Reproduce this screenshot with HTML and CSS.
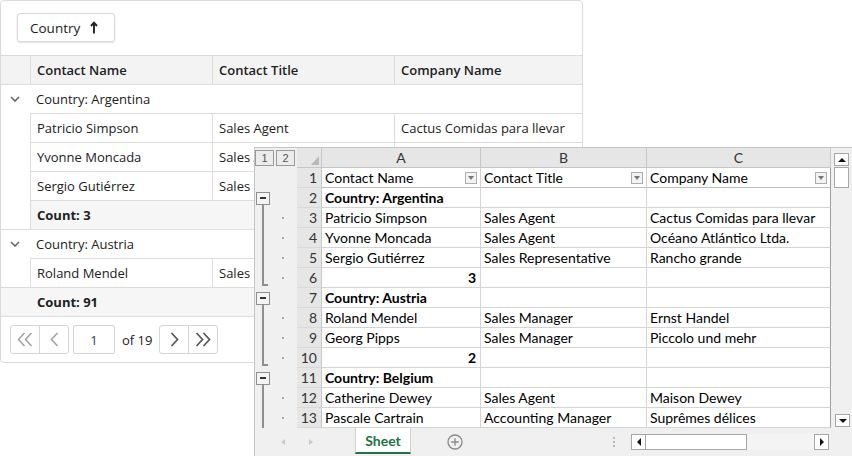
FILE: index.html
```html
<!DOCTYPE html>
<html>
<head>
<meta charset="utf-8">
<link rel="stylesheet" href="styles.css">
</head>
<body>
<div class="page">
  <div class="grid">
    <div class="group-panel">
      <div class="chip"><span>Country</span>
        <svg class="arrow" width="8" height="13" viewBox="0 0 8 13"><path d="M4 12.5V2 M1 5L4 1.6L7 5" stroke="#222" stroke-width="1.9" fill="none" stroke-linejoin="miter"/></svg>
      </div>
    </div>
    <div class="row full head">
      <div class="ind"></div><div class="cell">Contact Name</div><div class="cell">Contact Title</div><div class="cell last">Company Name</div>
    </div>
    <div class="row full grp">
      <div class="ind chev"><svg width="10" height="6" viewBox="0 0 10 6"><path d="M1 1L5 5L9 1" stroke="#666" stroke-width="1.6" fill="none"/></svg></div>
      <div class="gcap">Country: Argentina</div>
    </div>
    <div class="row"><div class="ind"></div><div class="cell">Patricio Simpson</div><div class="cell">Sales Agent</div><div class="cell last">Cactus Comidas para llevar</div></div>
    <div class="row"><div class="ind"></div><div class="cell">Yvonne Moncada</div><div class="cell">Sales Agent</div><div class="cell last">Océano Atlántico Ltda.</div></div>
    <div class="row"><div class="ind"></div><div class="cell">Sergio Gutiérrez</div><div class="cell">Sales Representative</div><div class="cell last">Rancho grande</div></div>
    <div class="row"><div class="ind"></div><div class="cell last sum">Count: 3</div></div>
    <div class="row full grp">
      <div class="ind chev"><svg width="10" height="6" viewBox="0 0 10 6"><path d="M1 1L5 5L9 1" stroke="#666" stroke-width="1.6" fill="none"/></svg></div>
      <div class="gcap">Country: Austria</div>
    </div>
    <div class="row"><div class="ind"></div><div class="cell">Roland Mendel</div><div class="cell">Sales Manager</div><div class="cell last">Ernst Handel</div></div>
    <div class="row full total">Count: 91</div>
    <div class="pager">
      <div class="pg">
        <div class="pb"><svg width="16" height="15" viewBox="0 0 16 15"><path d="M7.5 1L1.5 7.5L7.5 14M14.5 1L8.5 7.5L14.5 14" stroke="#a3a3a3" stroke-width="1.6" fill="none"/></svg></div>
        <div class="pb"><svg width="9" height="15" viewBox="0 0 9 15"><path d="M7.5 1L1.5 7.5L7.5 14" stroke="#a3a3a3" stroke-width="1.6" fill="none"/></svg></div>
      </div>
      <div class="pinput">1</div>
      <div class="pof">of 19</div>
      <div class="pg">
        <div class="pb"><svg width="9" height="15" viewBox="0 0 9 15"><path d="M1.5 1L7.5 7.5L1.5 14" stroke="#555" stroke-width="1.7" fill="none"/></svg></div>
        <div class="pb"><svg width="16" height="15" viewBox="0 0 16 15"><path d="M1.5 1L7.5 7.5L1.5 14M8.5 1L14.5 7.5L8.5 14" stroke="#555" stroke-width="1.7" fill="none"/></svg></div>
      </div>
    </div>
  </div>

  <div class="sheet">
    <div class="sbody">
      <div class="cells">
        <div class="oc top"><span class="lvl">1</span><span class="lvl">2</span></div>
        <div class="rh corner"><i class="tri"></i></div>
        <div class="ch">A</div><div class="ch">B</div><div class="ch">C</div>

        <div class="oc"></div><div class="rh">1</div>
        <div class="c flt"><span>Contact Name</span><i class="dd"><b></b></i></div>
        <div class="c flt"><span>Contact Title</span><i class="dd"><b></b></i></div>
        <div class="c flt cc"><span>Company Name</span><i class="dd"><b></b></i></div>

        <div class="oc ob"><i class="minus"></i></div><div class="rh">2</div>
        <div class="c b">Country: Argentina</div><div class="c"></div><div class="c cc"></div>

        <div class="oc ol"></div><div class="rh">3</div>
        <div class="c">Patricio Simpson</div><div class="c">Sales Agent</div><div class="c cc">Cactus Comidas para llevar</div>

        <div class="oc ol"></div><div class="rh">4</div>
        <div class="c">Yvonne Moncada</div><div class="c">Sales Agent</div><div class="c cc">Océano Atlántico Ltda.</div>

        <div class="oc ol"></div><div class="rh">5</div>
        <div class="c">Sergio Gutiérrez</div><div class="c">Sales Representative</div><div class="c cc">Rancho grande</div>

        <div class="oc oe"></div><div class="rh">6</div>
        <div class="c b r">3</div><div class="c"></div><div class="c cc"></div>

        <div class="oc ob"><i class="minus"></i></div><div class="rh">7</div>
        <div class="c b">Country: Austria</div><div class="c"></div><div class="c cc"></div>

        <div class="oc ol"></div><div class="rh">8</div>
        <div class="c">Roland Mendel</div><div class="c">Sales Manager</div><div class="c cc">Ernst Handel</div>

        <div class="oc ol"></div><div class="rh">9</div>
        <div class="c">Georg Pipps</div><div class="c">Sales Manager</div><div class="c cc">Piccolo und mehr</div>

        <div class="oc oe"></div><div class="rh">10</div>
        <div class="c b r">2</div><div class="c"></div><div class="c cc"></div>

        <div class="oc ob"><i class="minus"></i></div><div class="rh">11</div>
        <div class="c b">Country: Belgium</div><div class="c"></div><div class="c cc"></div>

        <div class="oc ol"></div><div class="rh">12</div>
        <div class="c">Catherine Dewey</div><div class="c">Sales Agent</div><div class="c cc">Maison Dewey</div>

        <div class="oc ol"></div><div class="rh">13</div>
        <div class="c">Pascale Cartrain</div><div class="c">Accounting Manager</div><div class="c cc">Suprêmes délices</div>
      </div>
      <div class="vscroll">
        <i class="sbtn"><b class="up"></b></i>
        <i class="vthumb"></i>
        <span class="vfill"></span>
        <i class="sbtn dn"><b class="down"></b></i>
      </div>
    </div>
    <div class="tabs">
      <i class="nav navl"></i>
      <i class="nav navr"></i>
      <div class="tab">Sheet</div>
      <div class="plus"><svg width="16" height="16" viewBox="0 0 16 16"><circle cx="8" cy="8" r="7" stroke="#8a8a8a" stroke-width="1.3" fill="none"/><path d="M8 4.2V11.8M4.2 8H11.8" stroke="#8a8a8a" stroke-width="1.3"/></svg></div>
      <div class="dots"><i></i><i></i><i></i></div>
      <div class="hs">
        <i class="ab"><b class="left"></b></i>
        <i class="hthumb"></i>
        <span class="htrack"></span>
        <i class="ab abr"><b class="right"></b></i>
      </div>
    </div>
  </div>
</div>
</body>
</html>
```

FILE: styles.css
```css
body {
  margin: 0;
  background: #fff;
  font-family: "Open Sans", "Noto Sans", sans-serif;
}

.page {
  position: relative;
  width: 852px;
  height: 456px;
  overflow: hidden;
}

/* ---------- Grid ---------- */
.grid {
  width: 583px;
  box-sizing: border-box;
  border: 1px solid #dadada;
  border-radius: 4px;
  font-size: 13px;
  color: #212121;
}

.group-panel {
  height: 54px;
  box-sizing: border-box;
  padding: 12px 0 0 16px;
  display: flex;
  align-items: flex-start;
}

.chip {
  width: 98px;
  height: 29px;
  box-sizing: border-box;
  border: 1px solid #d8d8d8;
  border-radius: 3px;
  box-shadow: 0 1px 2px rgba(0, 0, 0, 0.12);
  display: flex;
  align-items: center;
  padding-left: 12px;
  gap: 10px;
  font-size: 13.5px;
}

.row {
  display: flex;
  height: 29px;
  box-sizing: border-box;
}

.row.full {
  border-top: 1px solid #dcdcdc;
}

.ind {
  width: 29px;
  flex: none;
}

.chev {
  display: flex;
  align-items: center;
  padding-left: 9px;
  box-sizing: border-box;
}

.cell {
  width: 182px;
  flex: none;
  box-sizing: border-box;
  border-left: 1px solid #dcdcdc;
  border-top: 1px solid #dcdcdc;
  padding-left: 6px;
  display: flex;
  align-items: center;
  white-space: nowrap;
  overflow: hidden;
}

.cell.last {
  flex: 1;
  width: auto;
}

.row.full .cell {
  border-top: none;
}

.head {
  background: #f3f3f3;
  font-weight: 600;
}

.gcap {
  display: flex;
  align-items: center;
  padding-left: 6px;
}

.sum {
  background: #f6f6f6;
  font-weight: 700;
}

.total {
  background: #f6f6f6;
  font-weight: 700;
  align-items: center;
  padding-left: 36px;
}

.pager {
  height: 46px;
  box-sizing: border-box;
  border-top: 1px solid #dcdcdc;
  display: flex;
  align-items: center;
  padding-left: 9px;
}

.pg {
  display: flex;
  height: 29px;
  box-sizing: border-box;
  border: 1px solid #d5d5d5;
  border-radius: 3px;
}

.pb {
  width: 28px;
  display: flex;
  align-items: center;
  justify-content: center;
}

.pb + .pb {
  border-left: 1px solid #d5d5d5;
}

.pinput {
  width: 42px;
  height: 29px;
  box-sizing: border-box;
  margin-left: 4px;
  border: 1px solid #d5d5d5;
  border-radius: 2px;
  display: flex;
  align-items: center;
  justify-content: center;
  color: #2b3a67;
}

.pof {
  margin: 0 7px;
  font-size: 13px;
}

/* ---------- Spreadsheet ---------- */
.sheet {
  position: absolute;
  left: 254px;
  top: 147px;
  width: 598px;
  height: 309px;
  box-sizing: border-box;
  border-left: 1px solid #c4c4c4;
  border-top: 1px solid #c4c4c4;
  background: #f0f0f0;
  display: flex;
  flex-direction: column;
  font-family: "Lato", "Open Sans", sans-serif;
  font-size: 14px;
  color: #000;
}

.sbody {
  display: flex;
  height: 280px;
}

.cells {
  display: grid;
  grid-template-columns: 42px 25px 159px 166px 184px;
  grid-auto-rows: 20px;
  align-content: start;
}

.oc {
  background: #f0f0f0;
  box-sizing: border-box;
}

.oc.top {
  display: flex;
  gap: 2px;
  padding-top: 2px;
  box-sizing: border-box;
}

.lvl {
  width: 19px;
  height: 16px;
  box-sizing: border-box;
  border: 1px solid #9a9a9a;
  background: #ececec;
  font-size: 11px;
  color: #555;
  display: flex;
  align-items: center;
  justify-content: center;
  font-family: "Liberation Sans", sans-serif;
}

.ob {
  display: flex;
  align-items: center;
  padding-left: 1px;
  background:
    linear-gradient(#8f8f8f, #8f8f8f) 7px 16px / 2px 4px no-repeat,
    #f0f0f0;
}

.minus {
  width: 14px;
  height: 13px;
  box-sizing: border-box;
  border: 1px solid #8f8f8f;
  background:
    linear-gradient(#333, #333) center / 6px 2px no-repeat,
    #f4f4f4;
}

.ol {
  background:
    linear-gradient(#8f8f8f, #8f8f8f) 7px 0 / 2px 100% no-repeat,
    linear-gradient(#a8a8a8, #a8a8a8) 27px 9px / 2px 2px no-repeat,
    #f0f0f0;
}

.oe {
  background:
    linear-gradient(#8f8f8f, #8f8f8f) 7px 0 / 2px 18px no-repeat,
    linear-gradient(#8f8f8f, #8f8f8f) 7px 16px / 6px 2px no-repeat,
    linear-gradient(#a8a8a8, #a8a8a8) 27px 9px / 2px 2px no-repeat,
    #f0f0f0;
}

.rh {
  background: #e6e6e6;
  box-sizing: border-box;
  border-right: 1px solid #c6c6c6;
  border-bottom: 1px solid #d9d9d9;
  display: flex;
  align-items: center;
  justify-content: flex-end;
  padding-right: 4px;
  color: #333;
}

.rh.corner {
  align-items: flex-end;
  justify-content: flex-end;
  padding: 0 2px 2px 0;
  border-bottom: 1px solid #c6c6c6;
}

.tri {
  width: 8px;
  height: 9px;
  background: #b8b8b8;
  clip-path: polygon(100% 0, 100% 100%, 0 100%);
}

.ch {
  background: #e6e6e6;
  box-sizing: border-box;
  border-right: 1px solid #c6c6c6;
  border-bottom: 1px solid #c6c6c6;
  display: flex;
  align-items: center;
  justify-content: center;
  color: #333;
}

.c {
  background: #fff;
  box-sizing: border-box;
  border-right: 1px solid #d4d4d4;
  border-bottom: 1px solid #d4d4d4;
  padding-left: 3px;
  display: flex;
  align-items: center;
  white-space: nowrap;
  overflow: hidden;
}

.c.cc {
  border-right-color: #9e9e9e;
}

.c.b {
  font-weight: 700;
}

.c.r {
  justify-content: flex-end;
  padding-right: 4px;
}

.c.flt {
  justify-content: space-between;
  padding-right: 3px;
  border-bottom-color: #bdbdbd;
}

.dd {
  width: 12px;
  height: 12px;
  box-sizing: border-box;
  border: 1px solid #adadad;
  background: #f3f3f3;
  display: flex;
  align-items: center;
  justify-content: center;
}

.dd b {
  width: 0;
  height: 0;
  border-left: 3.5px solid transparent;
  border-right: 3.5px solid transparent;
  border-top: 4px solid #777;
}

.vscroll {
  width: 21px;
  box-sizing: border-box;
  display: flex;
  flex-direction: column;
  align-items: flex-start;
  padding: 5px 0 1px 3px;
}

.sbtn {
  width: 15px;
  height: 13px;
  box-sizing: border-box;
  border: 1px solid #a6a6a6;
  background: #fff;
  display: flex;
  align-items: center;
  justify-content: center;
}

.sbtn.dn {
  margin-left: 1px;
}

.up {
  width: 0;
  height: 0;
  border-left: 4px solid transparent;
  border-right: 4px solid transparent;
  border-bottom: 4px solid #111;
}

.down {
  width: 0;
  height: 0;
  border-left: 4px solid transparent;
  border-right: 4px solid transparent;
  border-top: 4px solid #111;
}

.vthumb {
  width: 15px;
  height: 21px;
  box-sizing: border-box;
  margin-top: 1px;
  border: 1px solid #a6a6a6;
  background: #fff;
}

.vfill {
  flex: 1;
}

.tabs {
  height: 28px;
  display: flex;
  align-items: center;
}

.nav {
  width: 0;
  height: 0;
  border-top: 3.5px solid transparent;
  border-bottom: 3.5px solid transparent;
}

.navl {
  margin-left: 26px;
  border-right: 4px solid #c9c9c9;
}

.navr {
  margin-left: 24px;
  border-left: 4px solid #c9c9c9;
}

.tab {
  align-self: flex-start;
  margin-left: 42px;
  width: 56px;
  height: 26px;
  box-sizing: border-box;
  background: #fff;
  border-left: 1px solid #d0d0d0;
  border-right: 1px solid #d0d0d0;
  border-bottom: 2px solid #217346;
  display: flex;
  align-items: center;
  justify-content: center;
  color: #217346;
  font-weight: 700;
  font-size: 14px;
}

.plus {
  margin-left: 36px;
  width: 16px;
  height: 16px;
  display: flex;
}

.dots {
  margin-left: 150px;
  width: 3px;
  display: flex;
  flex-direction: column;
  gap: 2px;
}

.dots i {
  width: 2px;
  height: 2px;
  background: #b9b9b9;
}

.hs {
  margin-left: 15px;
  width: 198px;
  height: 16px;
  display: flex;
  background: #f4f4f4;
}

.ab {
  width: 15px;
  height: 16px;
  box-sizing: border-box;
  border: 1px solid #a6a6a6;
  background: #fff;
  display: flex;
  align-items: center;
  justify-content: center;
}

.hthumb {
  width: 101px;
  height: 16px;
  box-sizing: border-box;
  border: 1px solid #a6a6a6;
  border-left: none;
  background: #fff;
}

.htrack {
  flex: 1;
}

.left {
  width: 0;
  height: 0;
  border-top: 4px solid transparent;
  border-bottom: 4px solid transparent;
  border-right: 4px solid #111;
}

.right {
  width: 0;
  height: 0;
  border-top: 4px solid transparent;
  border-bottom: 4px solid transparent;
  border-left: 4px solid #111;
}
```
